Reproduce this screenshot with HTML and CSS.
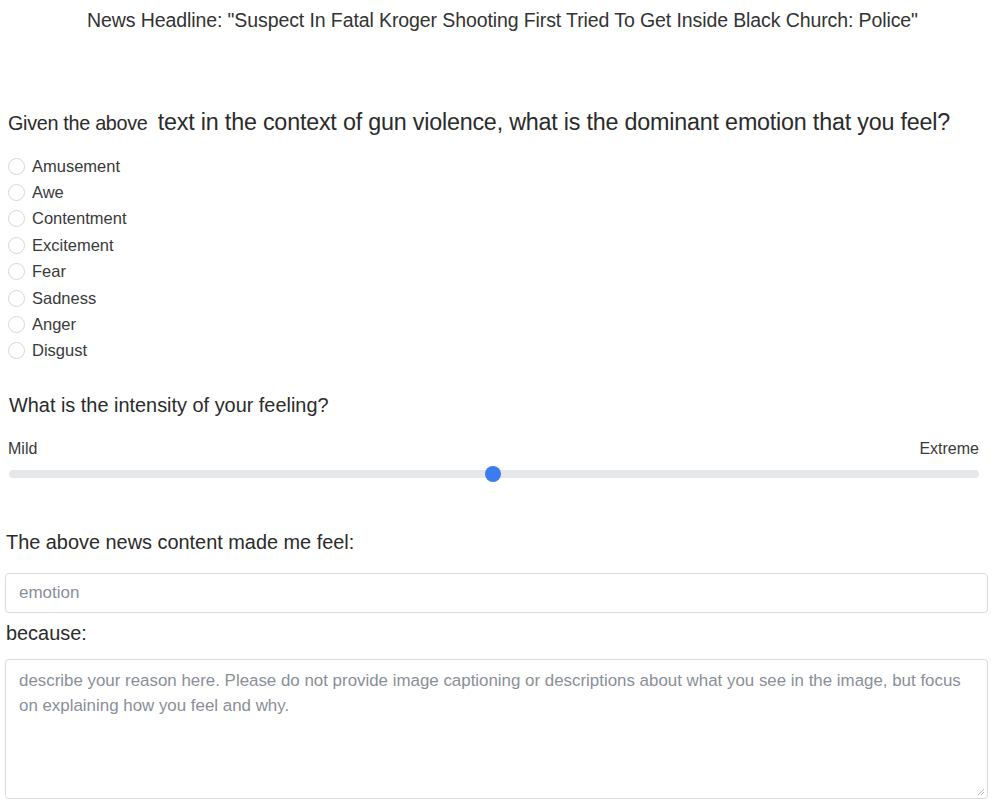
FILE: index.html
```html
<!DOCTYPE html>
<html lang="en">
<head>
<meta charset="utf-8">
<title>Emotion survey</title>
<link rel="stylesheet" href="styles.css">
</head>
<body>
<div class="page">
  <header class="headline">News Headline: "Suspect In Fatal Kroger Shooting First Tried To Get Inside Black Church: Police"</header>

  <section class="question">
    <h2 class="q-title"><span class="q-small">Given the above</span> text in the context of gun violence, what is the dominant emotion that you feel?</h2>
    <ul class="options">
      <li class="option"><span class="radio"></span><span>Amusement</span></li>
      <li class="option"><span class="radio"></span><span>Awe</span></li>
      <li class="option"><span class="radio"></span><span>Contentment</span></li>
      <li class="option"><span class="radio"></span><span>Excitement</span></li>
      <li class="option"><span class="radio"></span><span>Fear</span></li>
      <li class="option"><span class="radio"></span><span>Sadness</span></li>
      <li class="option"><span class="radio"></span><span>Anger</span></li>
      <li class="option"><span class="radio"></span><span>Disgust</span></li>
    </ul>
  </section>

  <section class="intensity">
    <h3 class="i-title">What is the intensity of your feeling?</h3>
    <div class="scale-labels"><span>Mild</span><span>Extreme</span></div>
    <div class="track"><span class="thumb"></span></div>
  </section>

  <section class="feel">
    <h3 class="f-title">The above news content made me feel:</h3>
    <div class="input"><span class="placeholder">emotion</span></div>
    <div class="because">because:</div>
    <div class="textarea">
      <p class="placeholder ta-text">describe your reason here. Please do not provide image captioning or descriptions about what you see in the image, but focus on explaining how you feel and why.</p>
      <svg class="grip" width="8" height="8" viewBox="0 0 8 8"><path d="M7 1L1 7M7 4L4 7" stroke="#b8b8b8" stroke-width="1"/></svg>
    </div>
  </section>
</div>
</body>
</html>
```

FILE: styles.css
```css
* { box-sizing: border-box; }
html, body { margin: 0; padding: 0; background: #fff; }
body {
  font-family: "Liberation Sans", Arial, sans-serif;
  color: #2b2b2b;
}
.page {
  width: 1003px;
  height: 806px;
  overflow: hidden;
  padding: 0 15px 0 5px;
}
.headline {
  text-align: center;
  font-size: 19.5px;
  line-height: 24px;
  padding-top: 8px;
  padding-left: 12px;
  color: #333;
  letter-spacing: -0.1px;
  white-space: nowrap;
}
.question { margin-top: 76px; }
.q-title {
  margin: 0 0 0 3px;
  font-weight: normal;
  font-size: 23.3px;
  line-height: 28px;
  color: #2b2b2b;
  letter-spacing: -0.2px;
  white-space: nowrap;
}
.q-small { font-size: 19.8px; margin-right: 4px; letter-spacing: -0.3px; }
.options {
  list-style: none;
  margin: 16px 0 0 0;
  padding: 0;
}
.option {
  display: flex;
  align-items: center;
  height: 26.4px;
  font-size: 16.5px;
  color: #3a3a3a;
  gap: 7px;
  padding-left: 3px;
}
.radio {
  width: 17px;
  height: 17px;
  border: 1px solid #d7d7d7;
  border-radius: 50%;
  background: #fff;
  flex: none;
}
.intensity { margin-top: 29px; }
.i-title {
  margin: 0 0 0 4px;
  font-weight: normal;
  font-size: 19.9px;
  line-height: 24px;
  color: #2b2b2b;
}
.scale-labels {
  display: flex;
  justify-content: space-between;
  margin: 23px 3px 0 3px;
  font-size: 16px;
  line-height: 18px;
  color: #3a3a3a;
  padding-right: 6px;
}
.track {
  position: relative;
  margin: 12px 3px 0 4px;
  height: 8px;
  border-radius: 4px;
  background: #e5e7eb;
  width: 970px;
}
.thumb {
  position: absolute;
  left: 476px;
  top: -4px;
  width: 16px;
  height: 16px;
  border-radius: 50%;
  background: #3b7cf0;
}
.feel { margin-top: 52px; }
.f-title {
  margin: 0 0 0 1px;
  font-weight: normal;
  font-size: 19.9px;
  line-height: 24px;
  color: #2b2b2b;
}
.input {
  margin-top: 19px;
  height: 40px;
  width: 983px;
  border: 1px solid #dcdcdc;
  border-radius: 4px;
  display: flex;
  align-items: center;
  padding-left: 13px;
}
.placeholder { color: #8a8f98; font-size: 17px; }
.because {
  margin-top: 8px;
  font-size: 19.9px;
  line-height: 24px;
  color: #2b2b2b;
  padding-left: 1px;
}
.textarea {
  position: relative;
  margin-top: 14px;
  height: 140px;
  width: 983px;
  border: 1px solid #dcdcdc;
  border-radius: 4px;
  padding: 8px 13px;
}
.ta-text {
  margin: 0;
  line-height: 25px;
  font-size: 16.9px;
}
.grip { position: absolute; right: 2px; bottom: 2px; }
```
